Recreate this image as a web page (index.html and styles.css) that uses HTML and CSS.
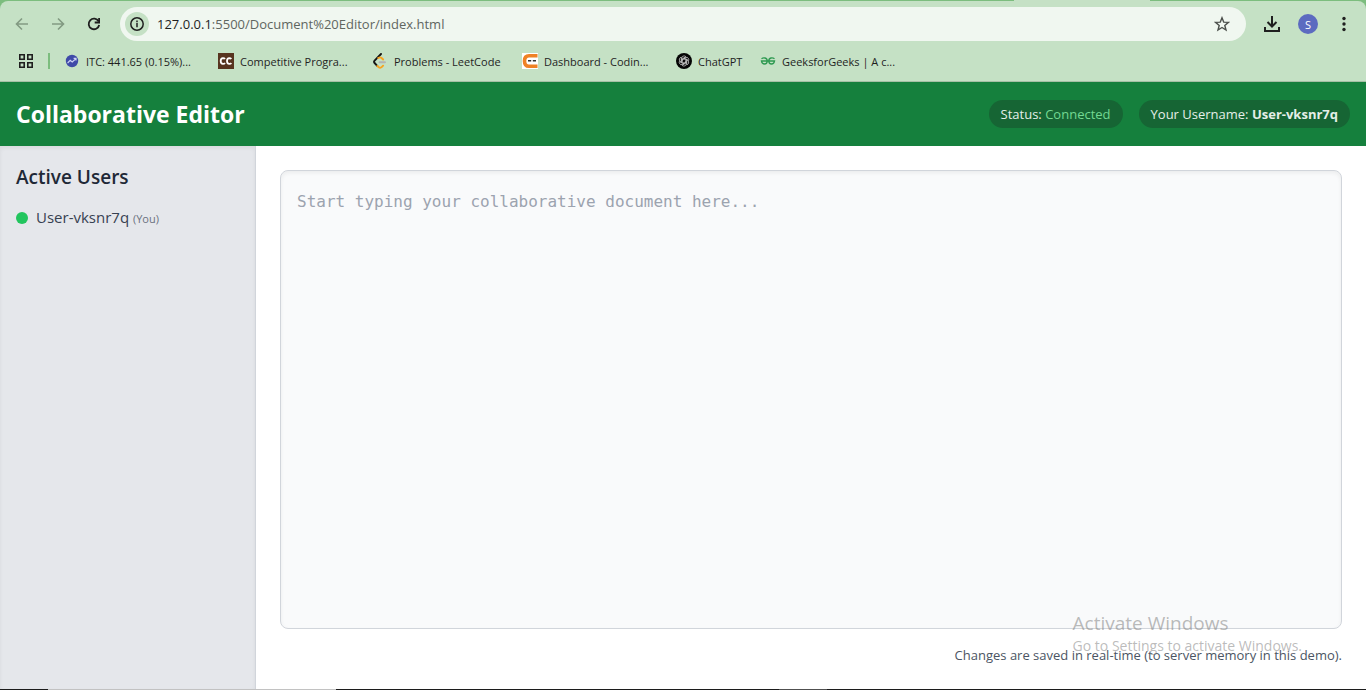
FILE: index.html
```html
<!DOCTYPE html>
<html lang="en">
<head>
<meta charset="utf-8">
<meta name="viewport" content="width=device-width, initial-scale=1">
<title>Collaborative Editor</title>
<link rel="stylesheet" href="styles.css">
</head>
<body>
<div class="browser">
  <div class="tab-strip"><span class="active-tab"></span></div>
  <div class="chrome">
    <div class="toolbar">
      <button class="icon-button muted" aria-label="Back"><svg width="16" height="16" viewBox="0 0 16 16" fill="none" stroke="currentColor" stroke-width="1.6"><path d="M14 8H3M8 2.5 2.5 8 8 13.5"/></svg></button>
      <button class="icon-button muted" aria-label="Forward"><svg width="16" height="16" viewBox="0 0 16 16" fill="none" stroke="currentColor" stroke-width="1.6"><path d="M2 8h11M8 2.500 13.500 8 8 13.500"/></svg></button>
      <button class="icon-button" aria-label="Reload"><svg width="16" height="16" viewBox="0 0 16 16" fill="none" stroke="currentColor" stroke-width="1.8"><path d="M12.600 5.300A5.300 5.300 0 1 0 13.200 9"/><path d="M13.100 2v4.500H8.700"/></svg></button>
      <div class="address">
        <button class="site-info" aria-label="Site information"><svg width="16" height="16" viewBox="0 0 16 16" fill="none" stroke="currentColor" stroke-width="1.5"><circle cx="8" cy="8" r="6.200"/><path d="M8 7v4.200M8 4.600v1.600"/></svg></button>
        <a class="url" href="#"><span class="host">127.0.0.1</span>:5500/Document%20Editor/index.html</a>
        <button class="star" aria-label="Bookmark this page"><svg width="16" height="16" viewBox="0 0 16 16" fill="none" stroke="currentColor" stroke-width="1.4"><path d="m8 1.800 1.700 4.300 4.700.3-3.600 3 1.200 4.600L8 11.500 4 14l1.200-4.600-3.600-3 4.700-.3z"/></svg></button>
      </div>
      <button class="icon-button" aria-label="Downloads"><svg width="16" height="18" viewBox="0 0 16 18" fill="none" stroke="currentColor" stroke-width="2"><path d="M8 1v10M3.500 7 8 11.500 12.500 7M1 12v4h14v-4"/></svg></button>
      <button class="avatar" aria-label="Profile">S</button>
      <button class="icon-button" aria-label="Menu"><svg width="16" height="16" viewBox="0 0 16 16" fill="currentColor"><circle cx="8" cy="2.500" r="1.700"/><circle cx="8" cy="8" r="1.700"/><circle cx="8" cy="13.500" r="1.700"/></svg></button>
    </div>
    <nav class="bookmarks" aria-label="Bookmarks">
      <button class="apps" aria-label="Apps"><svg width="16" height="16" viewBox="0 0 16 16" fill="none" stroke="currentColor" stroke-width="1.600"><path d="M1.800 1.800h4.400v4.400H1.800zM9.800 1.800h4.400v4.400H9.800zM1.800 9.800h4.400v4.400H1.800zM9.800 9.800h4.400v4.400H9.800z"/></svg></button>
      <span class="divider"></span>
      <div class="bookmark-list">
        <a href="#"><svg width="16" height="16" viewBox="0 0 16 16"><circle cx="8" cy="8" r="6.200" fill="#3f4aa8"/><path d="m3.600 10 2.600-2.600 2 1.600 3.800-3.400M9.600 5.400H12v2.200" fill="none" stroke="#cdd2f4" stroke-width="1.200"/></svg>ITC: 441.65 (0.15%)...</a>
        <a href="#"><svg width="16" height="16" viewBox="0 0 16 16"><path fill="#57341f" d="M0 0h16v16H0z"/><path d="M7 6Q6.400 5.100 5 5.100 2.700 5.300 2.700 8T5 10.900Q6.400 10.900 7 10M13.300 6Q12.700 5.100 11.300 5.100 9 5.300 9 8t2.300 2.900Q12.700 10.900 13.300 10" fill="none" stroke="#fff" stroke-width="1.800"/></svg>Competitive Progra...</a>
        <a href="#"><svg width="16" height="16" viewBox="0 0 16 16" fill="none" stroke-linecap="round" stroke-width="1.900"><path d="M6 13.500 3.800 14 5.500 13.700" stroke="none"/><path d="M9 1 2.600 7.600Q1.500 8.800 2.600 10l2.600 2.800" stroke="#151515"/><path d="m5.400 13 1 1q1.900 1.500 3.500-.1l1.200-1.200M6.200 5q2-1.300 3.400 0l1.500 1.500" stroke="#f7a420"/><path d="M7.500 9.300h5.500" stroke="#b3b3b3"/></svg>Problems - LeetCode</a>
        <a href="#"><svg width="16" height="16" viewBox="0 0 16 16"><path fill="#fff" d="M0 0h16v16H0z"/><path d="M15.500 2.700H7Q2.500 2.700 2.500 8T7 13.300h8.500" fill="none" stroke="#ef8225" stroke-width="3.600"/><path d="M6 7.700h3.200M10.800 7.700H14" stroke="#333" stroke-width="1.600"/></svg>Dashboard - Codin...</a>
        <a href="#"><svg width="16" height="16" viewBox="0 0 16 16"><circle cx="8" cy="8" r="8" fill="#050505"/><g fill="none" stroke="#d4d4d4" stroke-width=".7"><path id="petal" d="M5.700 9.300V5Q6 2.900 8 2.900q1.200 0 1.900.8L6.500 5.700V8"/><use href="#petal" transform="rotate(60 8 8)"/><use href="#petal" transform="rotate(120 8 8)"/><use href="#petal" transform="rotate(180 8 8)"/><use href="#petal" transform="rotate(240 8 8)"/><use href="#petal" transform="rotate(300 8 8)"/></g></svg>ChatGPT</a>
        <a href="#"><svg width="16" height="16" viewBox="0 0 16 16" fill="none" stroke="#2f9a52" stroke-width="1.400"><path d="M1.500 5.700Q3 4.600 5 5q2.200.6 2.200 3 0 3-2.700 3-2.600 0-3-3h13q-.4 3-3 3-2.700 0-2.700-3 0-2.400 2.200-3 2-.4 3.500.7"/></svg>GeeksforGeeks | A c...</a>
      </div>
    </nav>
  </div>
</div>
<header class="app-header">
  <h1>Collaborative Editor</h1>
  <div class="badges">
    <span class="pill">Status: <span class="connected">Connected</span></span>
    <span class="pill">Your Username: <strong>User-vksnr7q</strong></span>
  </div>
</header>
<div class="workspace">
  <aside class="sidebar">
    <h2>Active Users</h2>
    <ul>
      <li><span class="dot"></span><span>User-vksnr7q <small>(You)</small></span></li>
    </ul>
  </aside>
  <main class="editor">
    <textarea aria-label="Document" placeholder="Start typing your collaborative document here..."></textarea>
    <p class="note">Changes are saved in real-time (to server memory in this demo).</p>
  </main>
</div>
<div class="taskbar"><span class="search"></span><span class="running"></span></div>
<div class="watermark"><p class="watermark-title">Activate Windows</p><p>Go to Settings to activate Windows.</p></div>
</body>
</html>
```
FILE: styles.css
```css
* { box-sizing: border-box; }
body {
  margin: 0;
  min-height: 100vh;
  display: flex;
  flex-direction: column;
  font-family: "Open Sans", "Noto Sans", sans-serif;
  font-size: 15px;
  color: #1f2937;
  background: #fff;
}
h1, h2, p, ul { margin: 0; padding: 0; }
button { padding: 0; border: 0; background: none; color: inherit; font: inherit; }
a { color: inherit; text-decoration: none; }
svg { display: block; flex: none; }

.browser { background: #7cbd7e; }
.tab-strip { display: flex; justify-content: flex-end; height: 1px; padding-right: 216px; }
.active-tab { width: 136px; background: #c5e1c5; }
.chrome {
  background: #c5e1c5;
  border-bottom: 1px solid #a6c0a6;
  border-radius: 8px 8px 0 0;
  color: #1f1f1f;
}
.toolbar { display: flex; align-items: center; padding: 6px 14px 0; }
.icon-button { display: grid; place-items: center; width: 16px; height: 34px; margin-right: 20px; }
.icon-button.muted { color: #829a82; }
.toolbar .icon-button:last-child { margin-right: 0; }
.address {
  flex: 1;
  display: flex;
  align-items: center;
  height: 34px;
  margin: 0 18px 0 -2px;
  padding: 0 16px 0 5px;
  border-radius: 17px;
  background: #f0f7f0;
}
.site-info { display: grid; place-items: center; width: 24px; height: 24px; border-radius: 50%; background: #c5e1c5; }
.url { flex: 1; margin-left: 8px; font-size: 13px; color: #5f6660; }
.host { color: #1f1f1f; }
.star { color: #4c504c; }
.avatar {
  width: 20px;
  height: 20px;
  margin: 0 18px 0 -2px;
  border-radius: 50%;
  background: #5c6bc0;
  color: #fff;
  font-size: 11px;
}
.bookmarks { display: flex; align-items: center; height: 40px; padding: 0 18px; font-size: 11px; }
.divider { width: 2px; height: 16px; margin: 0 14px; background: #7cbd7e; }
.bookmark-list { display: grid; grid-template-columns: 154px 154px 150px 154px 84px auto; }
.bookmark-list a { display: flex; align-items: center; gap: 6px; white-space: nowrap; }

.app-header {
  display: flex;
  align-items: center;
  justify-content: space-between;
  height: 64px;
  padding: 0 16px;
  background: #15803d;
  color: #fff;
}
.app-header h1 { font-size: 23px; line-height: 32px; }
.badges { display: flex; gap: 16px; }
.pill { padding: 4px 12px; border-radius: 14px; background: #166534; color: #e5efe8; font-size: 13px; line-height: 20px; }
.connected { color: #73d892; }

.workspace { flex: 1; display: flex; }
.sidebar {
  width: 256px;
  padding: 16px;
  border-right: 1px solid #d1d5db;
  background: #e5e7eb;
  box-shadow: inset 0 2px 4px rgba(0, 0, 0, .06);
}
.sidebar h2 { margin-bottom: 10px; font-size: 19px; font-weight: 600; line-height: 30px; }
.sidebar ul { list-style: none; }
.sidebar li { display: flex; align-items: center; gap: 8px; line-height: 30px; color: #374151; }
.sidebar small { font-size: 11px; color: #6b7280; }
.dot { width: 12px; height: 12px; border-radius: 50%; background: #22c55e; }

.editor { flex: 1; display: flex; flex-direction: column; padding: 24px; }
.editor textarea {
  flex: 1;
  width: 100%;
  padding: 16px;
  border: 1px solid #d1d5db;
  border-radius: 8px;
  background: #f9fafb;
  box-shadow: inset 0 2px 4px rgba(0, 0, 0, .06);
  color: #1f2937;
  font: 16px/30px "DejaVu Sans Mono", monospace;
  resize: none;
}
.editor textarea::placeholder { color: #9ca3af; opacity: 1; }
.note { margin-top: 16px; font-size: 13px; line-height: 20px; text-align: right; color: #4b5563; }

.taskbar { display: flex; gap: 443px; height: 1px; padding-left: 48px; background: #1c1c1c; }
.search { width: 288px; background: #c2c2c2; }
.running { width: 48px; background: #505050; }
.watermark {
  position: absolute;
  right: 64px;
  bottom: 34px;
  color: rgba(130, 130, 130, .55);
  font-size: 14px;
  line-height: 20px;
  pointer-events: none;
}
.watermark-title { font-size: 19px; line-height: 26px; }
```
